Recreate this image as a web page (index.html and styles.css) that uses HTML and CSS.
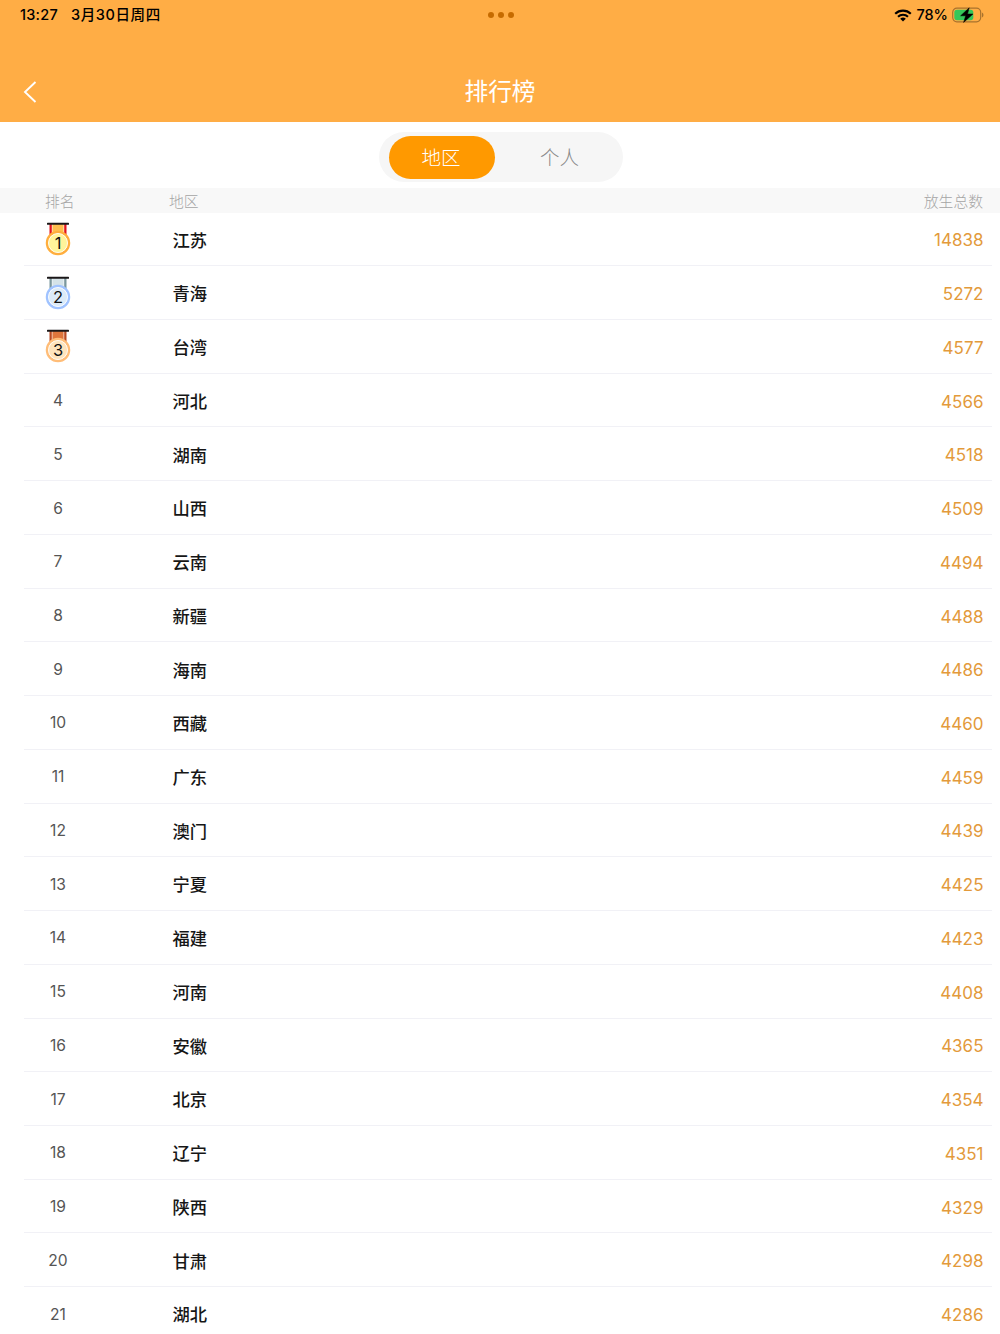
FILE: index.html
```html
<!DOCTYPE html>
<html lang="zh-CN">
<head>
  <meta charset="UTF-8" />
  <meta name="viewport" content="width=device-width, initial-scale=1" />
  <title>排行榜</title>
  <link rel="stylesheet" href="styles.css">
</head>

<body>

  <!-- Header -->
  <header>
    <div class="status-bar">
      <div class="status-left">
        <span class="time">13:27</span>
        <span class="date">3月30日周四</span>
      </div>
      <div class="dots"><i></i><i></i><i></i></div>
      <div class="status-right">
        <svg class="wifi" width="18" height="13" viewBox="0 0 18 13">
          <path d="M1.2 4.8a11.2 11.2 0 0 1 15.6 0M4 7.8a7.2 7.2 0 0 1 10 0" fill="none" stroke="#000" stroke-width="2.1" />
          <path d="M9 12.5L6.2 9.8a4.1 4.1 0 0 1 5.6 0z" />
        </svg>
        <span class="percent">78%</span>
        <svg class="battery" width="33" height="16" viewBox="0 0 33 16">
          <rect x="0.7" y="1.2" width="28" height="13.6" rx="4.2" fill="none" stroke="#a8722d" stroke-width="1.2" />
          <path d="M30 5.5q1.5.8 1.5 2.5T30 10.5z" fill="#a8722d" />
          <rect x="2.3" y="2.8" width="19" height="10.4" rx="2.6" fill="#34c759" />
          <path d="M17.2 0.8L8.6 8.8h5.1L11.6 15.4L21 7H15.5z" stroke="#000" stroke-width="0.5" />
        </svg>
      </div>
    </div>
    <div class="title-bar">
      <svg class="back" width="14" height="22" viewBox="0 0 14 22">
        <path d="M12.5 1L2 11L12.5 21" fill="none" stroke="#fff" stroke-width="1.9" />
      </svg>
      <h1>排行榜</h1>
    </div>
  </header>

  <!-- Tabs -->
  <div class="tab-area">
    <div class="tabs">
      <button class="tab active">地区</button>
      <button class="tab">个人</button>
    </div>
  </div>

  <!-- Ranking -->
  <div class="list-head">
    <span>排名</span>
    <span>地区</span>
    <span>放生总数</span>
  </div>

  <div id="rank-list"></div>

  <script>
    const regions = [
      ['江苏', 14838], ['青海', 5272], ['台湾', 4577], ['河北', 4566],
      ['湖南', 4518], ['山西', 4509], ['云南', 4494], ['新疆', 4488],
      ['海南', 4486], ['西藏', 4460], ['广东', 4459], ['澳门', 4439],
      ['宁夏', 4425], ['福建', 4423], ['河南', 4408], ['安徽', 4365],
      ['北京', 4354], ['辽宁', 4351], ['陕西', 4329], ['甘肃', 4298],
      ['湖北', 4286]
    ];

    const medals = ['gold', 'silver', 'bronze'];

    function medal(rank) {
      return `
        <svg class="medal ${medals[rank - 1]}" width="26" height="34" viewBox="0 0 26 34">
          <rect class="ribbon" x="4.5" y="2" width="17" height="12" />
          <rect class="ribbon-gap" x="6.8" y="2" width="12.4" height="12" />
          <rect class="ribbon-mid" x="7.4" y="2" width="11.2" height="12" />
          <rect class="bar" x="2" y="0.8" width="22" height="2" rx="0.6" />
          <circle class="coin" cx="13" cy="21" r="11" />
          <circle class="coin-line" cx="13" cy="21" r="9.5" />
          <text x="13" y="27">${rank}</text>
        </svg>`;
    }

    function renderList() {
      const list = document.getElementById('rank-list');

      regions.forEach(([name, total], i) => {
        const rank = i + 1;
        const row = document.createElement('div');
        row.className = 'row';
        row.innerHTML = `
          <span class="rank">${rank <= 3 ? medal(rank) : rank}</span>
          <span class="name">${name}</span>
          <span class="total">${total}</span>
        `;
        list.appendChild(row);
      });
    }

    renderList();
  </script>

</body>
</html>
```

FILE: styles.css
```css
* {
  box-sizing: border-box;
}

body {
  margin: 0;
  height: 1334px;
  overflow: hidden;
  font-family: Inter, 'Noto Sans CJK SC', sans-serif;
  background-color: #fff;
  color: #161616;
}

header {
  height: 122px;
  background-color: #ffad45;
}

.status-bar {
  display: grid;
  grid-template-columns: 1fr auto 1fr;
  align-items: center;
  height: 30px;
  padding: 0 15px 0 20px;
  color: #000;
  font-size: 14.5px;
  font-weight: 500;
  line-height: 30px;
}

.status-left {
  display: flex;
  gap: 13px;
  letter-spacing: 0.25px;
}

.date {
  letter-spacing: 0.6px;
}

.dots {
  display: flex;
  gap: 4px;
  margin-left: -3px;
}

.dots i {
  width: 6px;
  height: 6px;
  border-radius: 50%;
  background-color: #c66b00;
}

.status-right {
  display: flex;
  justify-content: flex-end;
  align-items: center;
  gap: 4px;
}

.title-bar {
  display: grid;
  grid-template-columns: 60px 1fr 60px;
  align-items: center;
  height: 62px;
  margin-top: 30px;
  padding-top: 1px;
}

.back {
  margin-left: 23px;
}

h1 {
  margin: 0;
  text-align: center;
  color: #fff;
  font-size: 23.7px;
  font-weight: 400;
  line-height: 34px;
}

.tab-area {
  display: flex;
  justify-content: center;
  height: 66px;
  padding: 10px 0 0 2px;
}

.tabs {
  display: flex;
  width: 244px;
  height: 50px;
  padding: 3.5px 10px;
  border-radius: 25px;
  background-color: #f6f6f6;
}

.tab {
  flex: 1;
  padding: 0 2px 1px 0;
  border: none;
  border-radius: 22px;
  background: none;
  color: #888;
  font-family: inherit;
  font-size: 19.5px;
  font-weight: 300;
  cursor: pointer;
}

.tab:last-child {
  padding-left: 13px;
}

.tab.active {
  flex: none;
  width: 106px;
  background-color: #ff9900;
  color: #fff;
}

.list-head,
.row {
  display: grid;
  align-items: center;
}

.list-head {
  grid-template-columns: 124px 1fr auto;
  height: 24.5px;
  padding: 2px 17px 0 45px;
  background-color: #f8f8f8;
  color: #a5a5a5;
  font-size: 14.8px;
  font-weight: 300;
  line-height: 24px;
}

.row {
  grid-template-columns: 68px 1fr auto;
  column-gap: 80.4px;
  height: 53.74px;
  margin: 0 8px 0 24px;
  padding-right: 8.5px;
  border-bottom: 1px solid #f1f1f6;
}

.rank {
  display: flex;
  justify-content: center;
  padding-top: 1px;
  color: #555;
  font-size: 15.6px;
  font-weight: 400;
}

.name {
  padding-top: 3.6px;
  font-size: 17.3px;
  font-weight: 500;
  line-height: 26px;
}

.total {
  padding-top: 3px;
  color: #e39a3b;
  font-size: 17px;
}

.medal {
  margin-top: -1px;
}

.medal text {
  fill: #111;
  font-size: 16.5px;
  font-weight: 400;
  text-anchor: middle;
}

.bar {
  fill: #1a1718;
}

.ribbon-gap {
  fill: #fff;
}

.coin-line {
  stroke: #fff;
  stroke-width: 0.7;
}

.coin {
  fill: #fff;
  stroke-width: 2.5;
}

.gold .ribbon {
  fill: #e3141c;
}

.gold .ribbon-mid {
  fill: #ffbd4d;
}

.gold .coin {
  stroke: #ffae3d;
}

.gold .coin-line {
  fill: #fff49a;
}

.silver .ribbon {
  fill: #7b979d;
}

.silver .ribbon-mid {
  fill: #d5e3e8;
}

.silver .coin {
  stroke: #a0c3ff;
}

.silver .coin-line {
  fill: #dcebf8;
}

.bronze .ribbon {
  fill: #b94b22;
}

.bronze .ribbon-mid {
  fill: #df763c;
}

.bronze .coin {
  stroke: #ffbd78;
}

.bronze .coin-line {
  fill: #ffe4bd;
}
```
